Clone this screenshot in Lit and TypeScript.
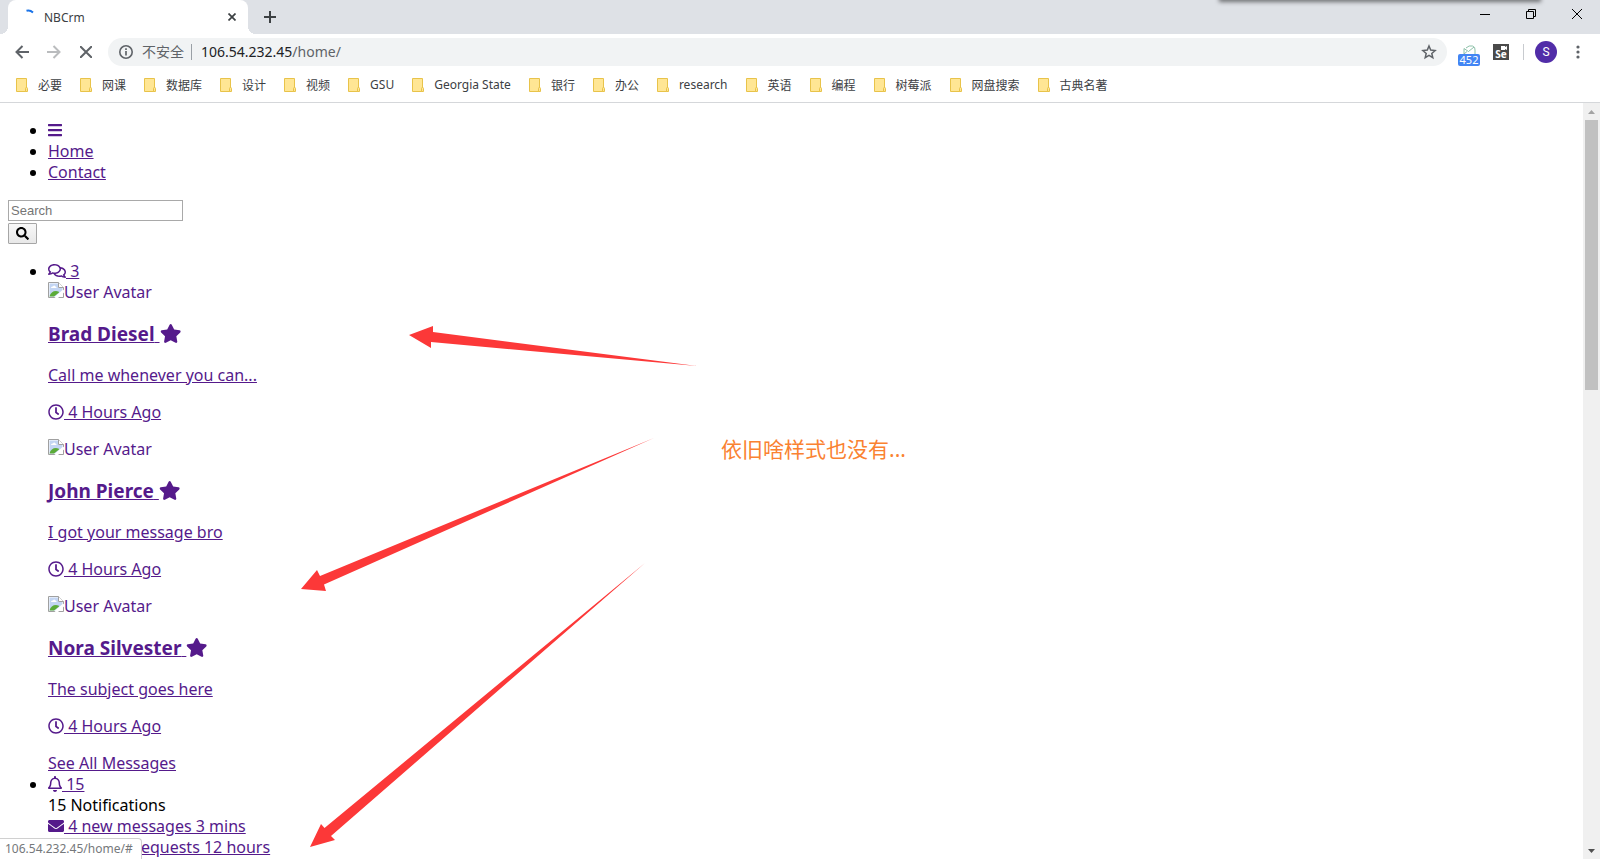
import { LitElement, html, css, svg } from "lit";
import { customElement } from "lit/decorators.js";

const glyph = (w: number, d: string) => svg`
  <svg class="fa" width=${w / 32} height="16" viewBox="0 0 ${w} 512" style="width:${w / 512}em" aria-hidden="true"><path d=${d} /></svg>`;

const FA = {
  bars: glyph(448, "M16 132h416c8.8 0 16-7.2 16-16V76c0-8.8-7.2-16-16-16H16C7.2 60 0 67.2 0 76v40c0 8.8 7.2 16 16 16zm0 160h416c8.8 0 16-7.2 16-16v-40c0-8.8-7.2-16-16-16H16c-8.8 0-16 7.2-16 16v40c0 8.8 7.2 16 16 16zm0 160h416c8.8 0 16-7.2 16-16v-40c0-8.8-7.2-16-16-16H16c-8.8 0-16 7.2-16 16v40c0 8.8 7.2 16 16 16z"),
  search: glyph(512, "M505 442.7L405.3 343c-4.5-4.5-10.6-7-17-7H372c27.6-35.3 44-79.7 44-128C416 93.1 322.9 0 208 0S0 93.1 0 208s93.1 208 208 208c48.3 0 92.7-16.4 128-44v16.3c0 6.4 2.5 12.5 7 17l99.7 99.7c9.4 9.4 24.6 9.4 33.9 0l28.3-28.3c9.4-9.4 9.4-24.6.1-34zM208 336c-70.7 0-128-57.2-128-128 0-70.7 57.2-128 128-128 70.7 0 128 57.2 128 128 0 70.7-57.2 128-128 128z"),
  comments: glyph(576, "M532 386.2c27.5-27.1 44-61.1 44-98.2 0-80-76.5-146.1-176.2-157.9C368.3 72.5 294.3 32 208 32 93.1 32 0 103.6 0 192c0 37 16.5 71 44 98.2-15.3 30.7-37.3 54.5-37.7 54.9-6.3 6.7-8.1 16.5-4.4 25 3.6 8.5 12 14 21.2 14 53.5 0 96.7-20.2 125.2-38.8 9.2 2.1 18.7 3.7 28.4 4.9C208.1 407.6 281.8 448 368 448c20.8 0 40.8-2.4 59.8-6.8C456.3 459.7 499.4 480 553 480c9.2 0 17.5-5.5 21.2-14 3.6-8.5 1.9-18.3-4.4-25-.4-.3-22.5-24.1-37.8-54.8zm-392.8-92.3L122.1 305c-14.1 9.1-28.5 16.3-43.1 21.4 2.7-4.7 5.4-9.7 8-14.8l15.5-31.1L77.7 256C64.2 242.6 48 220.7 48 192c0-60.7 73.3-112 160-112s160 51.3 160 112-73.3 112-160 112c-16.5 0-33-1.9-49-5.6l-19.8-4.5zM498.3 352l-24.7 24.4 15.5 31.1c2.6 5.1 5.3 10.1 8 14.8-14.6-5.1-29-12.3-43.1-21.4l-17.1-11.1-19.9 4.6c-16 3.7-32.5 5.6-49 5.6-54 0-102.2-20.1-131.3-49.7C338 339.5 416 272.9 416 192c0-3.4-.4-6.7-.7-10C479.7 196.5 528 238.8 528 288c0 28.7-16.2 50.6-29.7 64z"),
  star: glyph(576, "M259.3 17.8L194 150.2 47.9 171.5c-26.2 3.8-36.7 36.1-17.7 54.6l105.7 103-25 145.5c-4.5 26.3 23.2 46 46.4 33.7L288 439.6l130.7 68.7c23.2 12.2 50.9-7.4 46.4-33.7l-25-145.5 105.7-103c19-18.5 8.5-50.8-17.7-54.6L382 150.2 316.7 17.8c-11.7-23.6-45.6-23.9-57.4 0z"),
  clock: glyph(512, "M256 8C119 8 8 119 8 256s111 248 248 248 248-111 248-248S393 8 256 8zm0 448c-110.5 0-200-89.5-200-200S145.5 56 256 56s200 89.5 200 200-89.5 200-200 200zm61.8-104.4l-84.9-61.7c-3.1-2.3-4.9-5.9-4.9-9.7V116c0-6.6 5.4-12 12-12h32c6.6 0 12 5.4 12 12v141.7l66.8 48.6c5.4 3.9 6.5 11.4 2.6 16.8L334.6 349c-3.9 5.3-11.4 6.5-16.8 2.6z"),
  bell: glyph(448, "M439.4 362.3c-19.3-20.8-55.5-52-55.5-154.3 0-77.7-54.5-139.9-127.9-155.2V32c0-17.7-14.3-32-32-32s-32 14.3-32 32v20.8C118.6 68.1 64.1 130.3 64.1 208c0 102.3-36.2 133.5-55.5 154.3-6 6.4-8.7 14.1-8.6 21.7.1 16.4 13 32 32.1 32h383.8c19.1 0 32-15.6 32.1-32 .1-7.6-2.6-15.3-8.6-21.7zM67.5 368c21.2-28 44.4-74.3 44.5-159.4 0-.2-.1-.4-.1-.6 0-61.9 50.1-112 112-112s112 50.1 112 112c0 .2-.1.4-.1.6.1 85.1 23.3 131.5 44.5 159.4H67.5zM224 512c35.3 0 64-28.7 64-64H160c0 35.3 28.6 64 64 64z"),
  envelope: glyph(512, "M502.3 190.8c3.9-3.1 9.7-.2 9.7 4.7V400c0 26.5-21.5 48-48 48H48c-26.5 0-48-21.5-48-48V195.6c0-5 5.7-7.8 9.7-4.7 22.4 17.4 52.1 39.5 154.1 113.6 21.1 15.4 56.7 47.8 92.2 47.6 35.7.3 72-32.8 92.3-47.6 102-74.1 131.6-96.3 154-113.7zM256 320c23.2.4 56.6-29.2 73.4-41.4 132.7-96.3 142.8-104.7 173.4-128.7 5.8-4.5 9.2-11.5 9.2-18.9v-19c0-26.5-21.5-48-48-48H48c-26.5 0-48 21.5-48 48v19c0 7.4 3.4 14.3 9.2 18.9 30.6 23.9 40.7 32.4 173.4 128.7 16.8 12.2 50.2 41.8 73.4 41.4z"),
  users: glyph(640, "M96 224c35.3 0 64-28.7 64-64s-28.7-64-64-64-64 28.7-64 64 28.7 64 64 64zm448 0c35.3 0 64-28.7 64-64s-28.7-64-64-64-64 28.7-64 64 28.7 64 64 64zm32 32h-64c-17.6 0-33.5 7.1-45.1 18.6 40.3 22.1 68.9 62 75.1 109.4h66c17.7 0 32-14.3 32-32v-32c0-35.3-28.7-64-64-64zm-256 0c61.9 0 112-50.1 112-112S381.9 32 320 32 208 82.1 208 144s50.1 112 112 112zm76.8 32h-8.3c-20.8 10-43.9 16-68.5 16s-47.6-6-68.5-16h-8.3C179.6 288 128 339.6 128 403.2V432c0 26.5 21.5 48 48 48h288c26.5 0 48-21.5 48-48v-28.8c0-63.6-51.6-115.2-115.2-115.2zM173.1 274.6C161.5 263.1 145.6 256 128 256H64c-35.3 0-64 28.7-64 64v32c0 17.7 14.3 32 32 32h65.9c6.3-47.4 34.9-87.3 75.2-109.4z"),
};

const BOOKMARKS = ["必要", "网课", "数据库", "设计", "视频", "GSU", "Georgia State", "银行", "办公", "research", "英语", "编程", "树莓派", "网盘搜索", "古典名著"];

const MESSAGES = [
  { name: "Brad Diesel", text: "Call me whenever you can..." },
  { name: "John Pierce", text: "I got your message bro" },
  { name: "Nora Silvester", text: "The subject goes here" },
];

@customElement("browser-chrome")
class BrowserChrome extends LitElement {
  static styles = css`
    :host { display: block; flex: none; color: #3c4043; }
    svg { display: block; flex: none; }
    button { border: 0; padding: 0; margin: 0; background: none; font: inherit; color: inherit; display: grid; place-items: center; }
    .strip { display: flex; height: 34px; background: #dee1e6; padding-left: 8px; position: relative; overflow: hidden; }
    .shade { position: absolute; top: -4px; right: 60px; width: 320px; height: 4px; box-shadow: 0 1px 4px 1px rgba(0, 0, 0, 0.5); }
    .tab { position: relative; display: flex; align-items: center; width: 240px; box-sizing: border-box; padding: 0 8px 0 16px; background: #fff; border-radius: 8px 8px 0 0; font-size: 12px; }
    .tab::before, .tab::after { content: ""; position: absolute; bottom: 0; width: 8px; height: 8px; }
    .tab::before { right: 100%; background: radial-gradient(circle at 0 0, transparent 8px, #fff 8px); }
    .tab::after { left: 100%; background: radial-gradient(circle at 100% 0, transparent 8px, #fff 8px); }
    .title { flex: 1; padding-left: 4px; }
    .close { width: 16px; height: 16px; }
    .new { width: 28px; margin-left: 8px; }
    .window { display: flex; margin-left: auto; height: 28px; }
    .window button { width: 46px; }
    .bar { display: flex; align-items: center; height: 36px; padding: 0 12px 0 8px; }
    .nav { width: 28px; height: 28px; margin-right: 4px; }
    .omni { display: flex; align-items: center; flex: 1; min-width: 0; height: 28px; margin-left: 4px; padding: 0 10px; border-radius: 14px; background: #f1f3f4; font-size: 14px; color: #5f6368; }
    .safe { padding: 0 7px 0 8px; border-right: 1px solid #9aa0a6; line-height: 16px; white-space: nowrap; }
    .url { flex: 1; padding-left: 9px; line-height: 28px; }
    .host { color: #202124; }
    .ext { position: relative; place-items: start; width: 24px; height: 28px; margin-left: 10px; }
    .ext svg { margin: 7px 0 0 6px; }
    .count { position: absolute; left: 1px; bottom: 0; width: 22px; height: 12px; border-radius: 2px; background: #4285f4; color: #fff; font-size: 11px; line-height: 12px; text-align: center; }
    .se { display: grid; align-content: end; width: 16px; height: 16px; margin-left: 12px; background: #4a4a4a; color: #fff; font-size: 10px; line-height: 11px; font-weight: 700; position: relative; }
    .se svg { position: absolute; top: 2px; right: 2px; }
    .sep { width: 1px; height: 16px; margin: 0 11px 0 14px; background: #c8cbcf; }
    .avatar { width: 22px; height: 22px; border-radius: 11px; background: #512da8; color: #fff; font: 12px Roboto, sans-serif; }
    .more { width: 20px; height: 28px; margin-left: 11px; }
    .marks { display: flex; gap: 18px; height: 32px; padding-left: 16px; align-items: center; border-bottom: 1px solid #d5d7da; font-size: 12px; }
    .marks a { display: flex; align-items: center; gap: 10px; height: 16px; margin-bottom: 3px; color: inherit; text-decoration: none; white-space: nowrap; }
  `;
  render() {
    return html`
      <div class="strip">
        <div class="shade"></div>
        <div class="tab">
          <svg width="16" height="16" viewBox="0 0 16 16" fill="none"><path d="M2.5 1.8Q6 .8 9 3.4" stroke="#1a73e8" stroke-width="2" /></svg>
          <span class="title">NBCrm</span>
          <button class="close" aria-label="Close tab"><svg width="8" height="8" viewBox="0 0 8 8"><path d="M.5.5l7 7M7.5.5l-7 7" stroke="#3c4043" stroke-width="1.7" /></svg></button>
        </div>
        <button class="new" aria-label="New tab"><svg width="12" height="12" viewBox="0 0 12 12"><path d="M6 0v12M0 6h12" stroke="#3c4043" stroke-width="2" /></svg></button>
        <div class="window">
          <button aria-label="Minimize"><svg width="10" height="10"><path d="M0 5.5h10" stroke="#000" /></svg></button>
          <button aria-label="Restore"><svg width="10" height="10" fill="none" stroke="#000"><path d="M.5 2.5h7v7h-7zM2.5 2.5v-2h7v7h-2" /></svg></button>
          <button aria-label="Close"><svg width="10" height="10"><path d="M0 0l10 10M10 0L0 10" stroke="#000" /></svg></button>
        </div>
      </div>
      <div class="bar">
        <button class="nav" aria-label="Back"><svg width="14" height="14" fill="none" stroke="#5f6368" stroke-width="2"><path d="M14 7H1.5M7.5 1L1.5 7l6 6" /></svg></button>
        <button class="nav" aria-label="Forward"><svg width="14" height="14" fill="none" stroke="#babcbe" stroke-width="2"><path d="M0 7h12.5M6.5 1l6 6-6 6" /></svg></button>
        <button class="nav" aria-label="Stop"><svg width="12" height="12" stroke="#5f6368" stroke-width="2"><path d="M0 0l12 12M12 0L0 12" /></svg></button>
        <div class="omni">
          <svg width="16" height="16" viewBox="0 0 16 16" fill="none" stroke="#5f6368"><circle cx="8" cy="8" r="6.2" stroke-width="1.6" /><path d="M8 7v4.5M8 4.3v1.6" stroke-width="1.7" /></svg>
          <span class="safe">不安全</span>
          <span class="url"><span class="host">106.54.232.45</span>/home/</span>
          <button aria-label="Bookmark this page"><svg width="16" height="16" viewBox="0 0 16 16" fill="none" stroke="#5f6368" stroke-width="1.5"><path d="M8 2l1.7 4.1 4.4.4-3.3 2.9 1 4.3L8 11.4l-3.8 2.3 1-4.3L1.9 6.5l4.400-.4z" /></svg></button>
        </div>
        <button class="ext" aria-label="Mail"><svg width="13" height="10" viewBox="0 0 13 10" fill="none" stroke="#8cc0a8"><path d="M1 9V3.5L5.5 6.5l5.5-4.5M3 3Q6 0 9.5 1q3 1 2.5 4v4M1 9l3-2.5" /></svg><span class="count">452</span></button>
        <button class="se" aria-label="Selenium"><svg width="6" height="4"><path d="M0 0h4v1l2-1v4l-2-1v1H0z" fill="#fff" /></svg>Se</button>
        <span class="sep"></span>
        <button class="avatar" aria-label="Profile">S</button>
        <button class="more" aria-label="Menu"><svg width="4" height="14" fill="#5f6368"><circle cx="2" cy="2" r="1.6" /><circle cx="2" cy="7" r="1.6" /><circle cx="2" cy="12" r="1.6" /></svg></button>
      </div>
      <nav class="marks">
        ${BOOKMARKS.map((b) => html`<a href="#"><svg width="12" height="14" viewBox="0 0 12 14" fill="#ffe694" stroke="#e8c34a"><path d="M.5.5h10v13H.5z" /><path d="M9.5 13.5v-3q0-1 1-1t1 1v3z" /></svg>${b}</a>`)}
      </nav>`;
  }
}

@customElement("crm-page")
class CrmPage extends LitElement {
  static styles = css`
    :host { display: block; padding: 1px 8px 0; font-size: 16px; line-height: 21px; color: #000; }
    a { color: #551a8b; }
    ul { margin: 16px 0; padding-left: 40px; }
    p { margin: 16px 0; }
    h3 { margin: 18px 0; font-size: 19px; line-height: 26px; font-weight: 700; }
    .fa { height: 1em; vertical-align: -2px; fill: currentColor; overflow: visible; }
    form { display: grid; justify-items: start; gap: 2px; padding: 1px 0; }
    input { box-sizing: border-box; width: 175px; height: 21px; padding: 1px 2px; border: 1px solid #a9a9a9; font: 13px "Liberation Sans", sans-serif; }
    input::placeholder { color: #757575; }
    .go { display: grid; place-items: center; width: 29px; height: 21px; padding: 0; border: 1px solid #a6a6a6; border-radius: 1px; background: linear-gradient(#f8f8f8, #e8e8e8); font-size: 13px; color: #000; }
    .broken { display: inline-flex; height: 21px; vertical-align: top; }
  `;
  render() {
    return html`
      <ul>
        <li><a href="#" aria-label="Menu">${FA.bars}</a></li>
        <li><a href="#">Home</a></li>
        <li><a href="#">Contact</a></li>
      </ul>
      <form>
        <input type="search" placeholder="Search" aria-label="Search" />
        <button class="go" type="button" aria-label="Submit search">${FA.search}</button>
      </form>
      <ul>
        <li>
          <a href="#">${FA.comments} 3</a>
          ${MESSAGES.map((m) => html`
            <div>
              <a href="#">
                <span class="broken"><svg width="16" height="16" viewBox="0 0 16 16"><path d="M.5.5h10l5 5v10H.5z" fill="#fff" stroke="#a0a0a0" /><path d="M1.5 1.5h8.5v4.5h4.5v2L7 14.5H1.5z" fill="#c3d5f3" /><path d="M3 6q0-2 2-1.5Q6 2.5 7.5 4.5 9 5 8.5 6z" fill="#fff" /><path d="M1.5 14.5Q3 9 8 9q3 0 3 1.5l-5 4z" fill="#5bab38" /><path d="M10.5.5v5h5" fill="#fff" stroke="#a0a0a0" /><path d="M6.5 16L16 7.5v3L10 16z" fill="#fff" /></svg>User Avatar</span>
                <h3>${m.name} ${FA.star}</h3>
                <p>${m.text}</p>
                <p>${FA.clock} 4 Hours Ago</p>
              </a>
            </div>`)}
          <a href="#">See All Messages</a>
        </li>
        <li>
          <a href="#">${FA.bell} 15</a>
          <div>15 Notifications</div>
          <div><a href="#">${FA.envelope} 4 new messages 3 mins</a></div>
          <div><a href="#">${FA.users} 8 friend requests 12 hours</a></div>
        </li>
      </ul>`;
  }
}

@customElement("app-root")
class AppRoot extends LitElement {
  static styles = css`
    :host { display: flex; flex-direction: column; position: relative; height: 100vh; overflow: hidden; background: #fff; font-family: "Noto Sans", "Noto Sans CJK SC", sans-serif; }
    .view { display: flex; flex: 1; min-height: 0; }
    .page { flex: 1; min-width: 0; overflow: hidden; }
    .scroll { display: flex; flex-direction: column; align-items: center; width: 17px; background: #f0f0f0; }
    .scroll svg { flex: none; }
    .track { flex: 1; width: 13px; }
    .thumb { height: 37.4%; background: #c1c1c1; }
    .status { position: absolute; left: 0; bottom: 0; height: 20px; padding: 0 8px 0 5px; border: 1px solid #d0d0d0; border-width: 1px 1px 0 0; border-radius: 0 4px 0 0; background: #fff; color: #75787b; font-size: 12px; line-height: 20px; }
    .arrows { position: absolute; left: 0; top: 0; pointer-events: none; }
    .note { position: absolute; left: 721px; top: 434px; font-size: 21px; line-height: 30px; color: #fa8231; }
  `;
  render() {
    return html`
      <browser-chrome></browser-chrome>
      <div class="view">
        <div class="page"><crm-page></crm-page></div>
        <div class="scroll">
          <svg width="17" height="17"><path d="M5 11l3.5-4 3.5 4z" fill="#a3a3a3" /></svg>
          <div class="track"><div class="thumb"></div></div>
          <svg width="17" height="17"><path d="M5 7l3.5 4L12 7z" fill="#505050" /></svg>
        </div>
      </div>
      <svg class="arrows" width="720" height="859" viewBox="0 0 720 859" fill="#fc3838">
        <path d="M409 335l24-9v6l264 34L431 342v6z" />
        <path d="M301 589l16-19 3 6 334-138-330 146.5 2 6.5z" />
        <path d="M310 847l11-23 3.5 4L645 563 331 836l4 4z" />
      </svg>
      <div class="note">依旧啥样式也没有...</div>
      <div class="status">106.54.232.45/home/#</div>`;
  }
}
